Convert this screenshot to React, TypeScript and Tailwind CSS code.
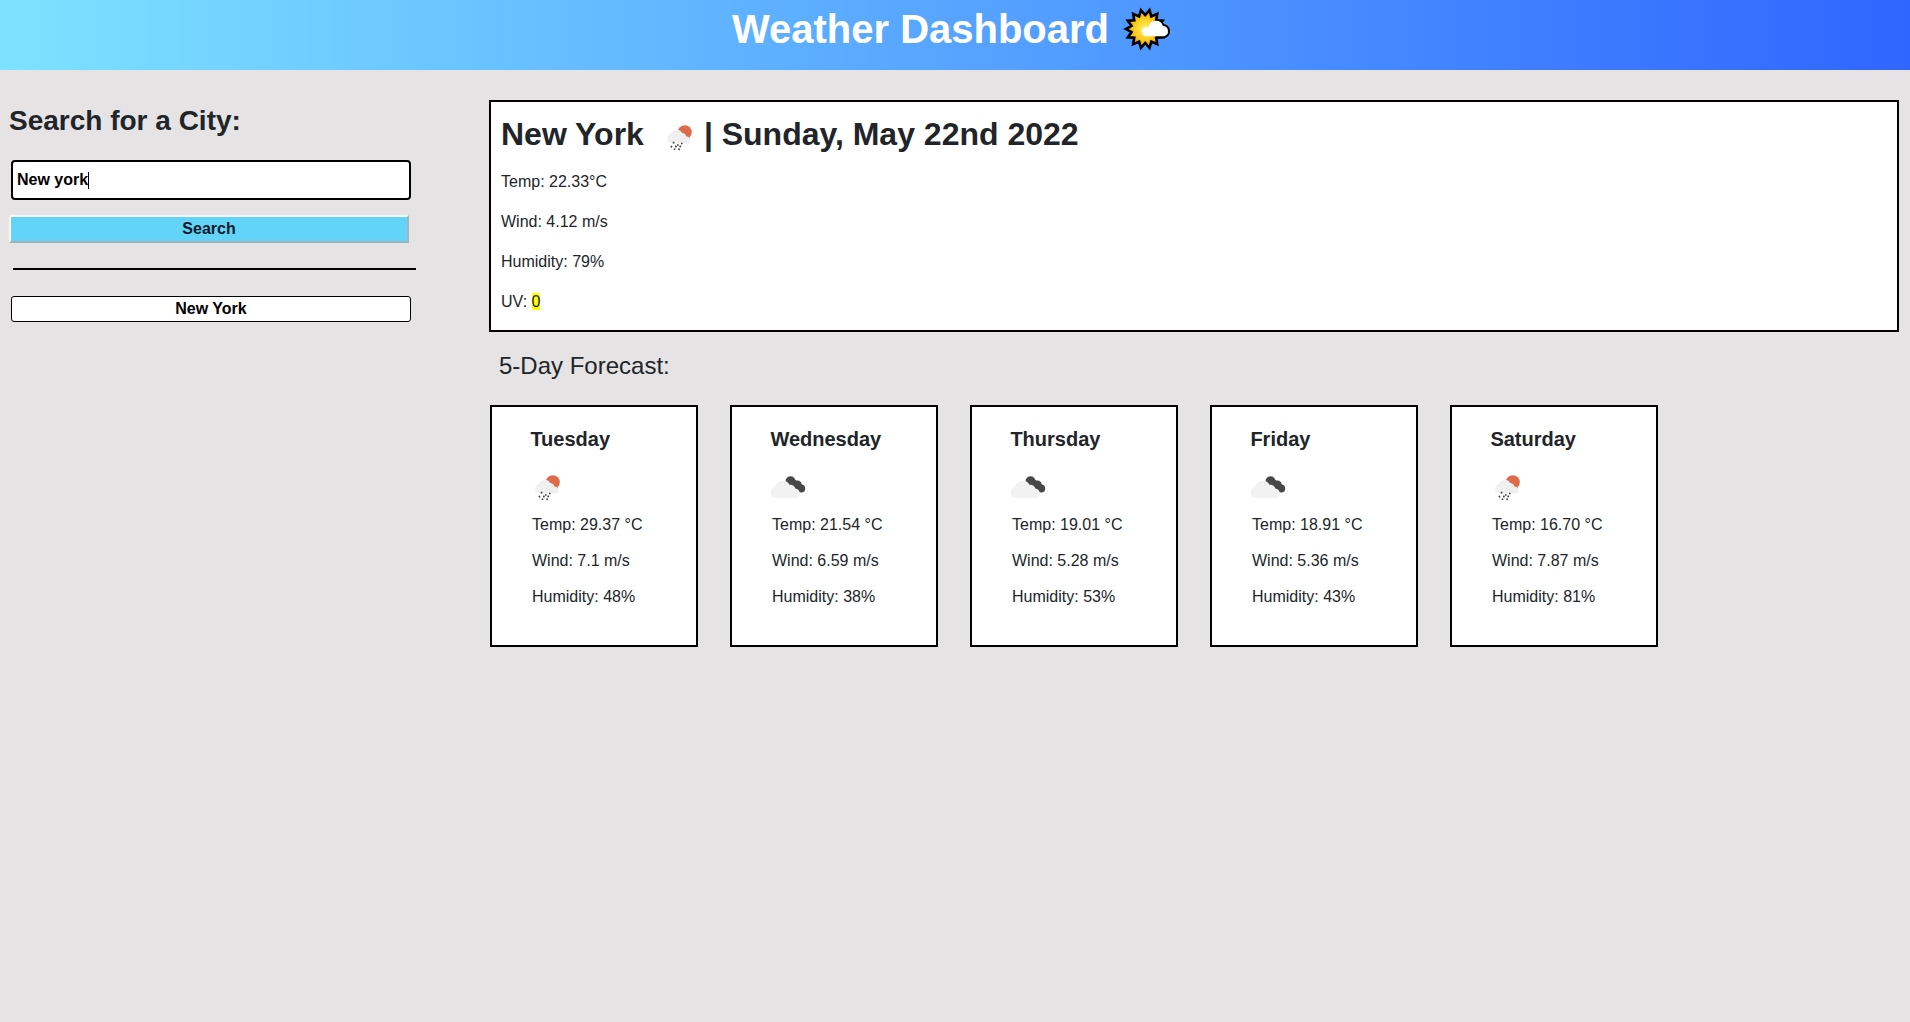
import React from "react";

function SunLogo() {
  const cx = 22.2, cy = 23, n = 14;
  const pts: string[] = [];
  for (let i = 0; i < n * 2; i++) {
    const r = i % 2 === 0 ? 19.3 : 14;
    const a = (Math.PI * (i + 1)) / n - Math.PI / 2;
    pts.push((cx + r * Math.cos(a)).toFixed(2) + "," + (cy + r * Math.sin(a)).toFixed(2));
  }
  return (
    <svg viewBox="0 0 49 46" className="h-[46px] w-[49px] shrink-0">
      <defs>
        <radialGradient id="sun" cx="0.5" cy="0.5" r="0.5">
          <stop offset="0.2" stopColor="#ffe94a" />
          <stop offset="0.6" stopColor="#f9c91c" />
          <stop offset="0.9" stopColor="#eaa90d" />
        </radialGradient>
      </defs>
      <polygon points={pts.join(" ")} fill="url(#sun)" stroke="#000" strokeWidth="2.6" strokeLinejoin="miter" />
      <path d="M34 16.500a7 7 0 0 1 6 3.500a5.200 5.200 0 0 1 1.300 10.200H35z" fill="#000" stroke="#000" strokeWidth="4" strokeLinejoin="round" />
      <path d="M23.500 30.200a4.700 4.700 0 0 1-.3-9.400q1.300-.2 2.500.2a7.300 7.300 0 0 1 14.200-1a5.200 5.200 0 0 1 1.300 10.200z" fill="#fff" />
    </svg>
  );
}

function RainIcon() {
  return (
    <svg viewBox="0 0 26 26" className="h-[26px] w-[26px]">
      <circle cx="18.800" cy="7.200" r="7" fill="#de6c4c" />
      <path d="M5 18.500a5 5 0 0 1-.3-9.600a6.500 6.500 0 0 1 11.500-1a5 5 0 0 1 4.200 3.500a3.800 3.800 0 0 1 2 7.100z" fill="#f0f0f0" />
      <path d="M7.600 16.800v1.600M11.800 19.300v1.400M15.800 17.800v1.500M5.700 20.800l-.5 1.700M10.200 20.600l-.7 1.800M14.600 20.600l-.7 1.700M8.600 23.500l-.2 1.500M13.300 23.500l-.4 1.600" stroke="#3c3c3c" strokeWidth="1.600" />
    </svg>
  );
}

function CloudIcon() {
  return (
    <svg viewBox="0 0 36 23" className="h-[23px] w-[36px]">
      <g fill="#484848">
        <circle cx="20.500" cy="5.200" r="5" />
        <circle cx="27.500" cy="8.600" r="4.200" />
        <circle cx="31.300" cy="12.500" r="3.900" />
        <path d="M18 8l5-6 10 8-3 6z" />
      </g>
      <path d="M5.500 22a5.400 5.400 0 0 1-.5-10.700a7.800 7.800 0 0 1 14.500-2.500a5.500 5.500 0 0 1 5.800 3.700a5 5 0 0 1 1.500 9.500z" fill="#f2f2f2" />
    </svg>
  );
}

const days = [
  { name: "Tuesday", icon: "rain", temp: "29.37", wind: "7.1", humidity: 48 },
  { name: "Wednesday", icon: "cloud", temp: "21.54", wind: "6.59", humidity: 38 },
  { name: "Thursday", icon: "cloud", temp: "19.01", wind: "5.28", humidity: 53 },
  { name: "Friday", icon: "cloud", temp: "18.91", wind: "5.36", humidity: 43 },
  { name: "Saturday", icon: "rain", temp: "16.70", wind: "7.87", humidity: 81 },
];

export default function App() {
  return (
    <div className="min-h-screen bg-[#e5e3e4] font-['Liberation_Sans',Arial,sans-serif] text-base leading-6 text-[#212529]">
      <header className="flex h-[70px] justify-center bg-linear-to-r/srgb from-[#7de2ff] to-[#2f66ff] pt-[5px] pr-[6px]">
        <h1 className="text-[40px] leading-[48px] font-bold text-white">Weather Dashboard</h1>
        <div className="ml-[14px] pt-px">
          <SunLogo />
        </div>
      </header>

      <div className="flex pt-[30px]">
        <aside className="w-[489px] shrink-0">
          <h2 className="mt-1 ml-[9px] text-[28px] leading-[34px] font-bold">Search for a City:</h2>
          <div className="mt-[22px] ml-[11px] flex h-10 w-[400px] items-center rounded-[4px] border-2 border-black bg-white pl-1 font-bold text-black">
            <span>New york</span>
            <span className="h-[17px] w-px bg-black" />
          </div>
          <button className="mt-[15px] ml-[9px] block h-7 w-[400px] border-2 border-t-[#f6f8f9] border-r-[#9fb3bb] border-b-[#9fb3bb] border-l-[#f6f8f9] bg-[#61d4f8] leading-6 font-bold text-[#0b1a2b]">
            Search
          </button>
          <hr className="mt-[25px] ml-[13px] w-[403px] border-t-2 border-black" />
          <button className="mt-[26px] ml-[11px] block h-[26px] w-[400px] rounded-[3px] border border-black bg-white leading-6 font-bold text-black">
            New York
          </button>
        </aside>

        <main className="mr-[11px] grow">
          <section className="h-[232px] border-2 border-black bg-white pl-2.5">
            <h2 className="mt-[13px] flex h-[38px] text-[32px] leading-[38px] font-bold">
              <span>New York</span>
              <span className="mr-3 ml-[22px] pt-[10px]"><RainIcon /></span>
              <span>| Sunday, May 22nd 2022</span>
            </h2>
            <div className="mt-[17px] flex flex-col gap-4">
              <p>Temp: 22.33°C</p>
              <p>Wind: 4.12 m/s</p>
              <p>Humidity: 79%</p>
              <p>UV: <span className="bg-[#ffff00]">0</span></p>
            </div>
          </section>

          <h3 className="mt-[19px] ml-2.5 text-2xl leading-[29px]">5-Day Forecast:</h3>

          <div className="mt-[25px] ml-px flex gap-8">
            {days.map((d) => (
              <article key={d.name} className="h-[242px] w-[208px] border-2 border-black bg-white pl-[38px]">
                <h4 className="mt-5 ml-[0.4px] text-xl leading-6 font-bold">{d.name}</h4>
                <div className="mt-6 h-[38px]">
                  {d.icon === "rain" ? (
                    <div className="pl-1"><RainIcon /></div>
                  ) : (
                    <div className="pt-px"><CloudIcon /></div>
                  )}
                </div>
                <div className="ml-[2px] flex flex-col gap-3">
                  <p>Temp: {d.temp} °C</p>
                  <p>Wind: {d.wind} m/s</p>
                  <p>Humidity: {d.humidity}%</p>
                </div>
              </article>
            ))}
          </div>
        </main>
      </div>
    </div>
  );
}
